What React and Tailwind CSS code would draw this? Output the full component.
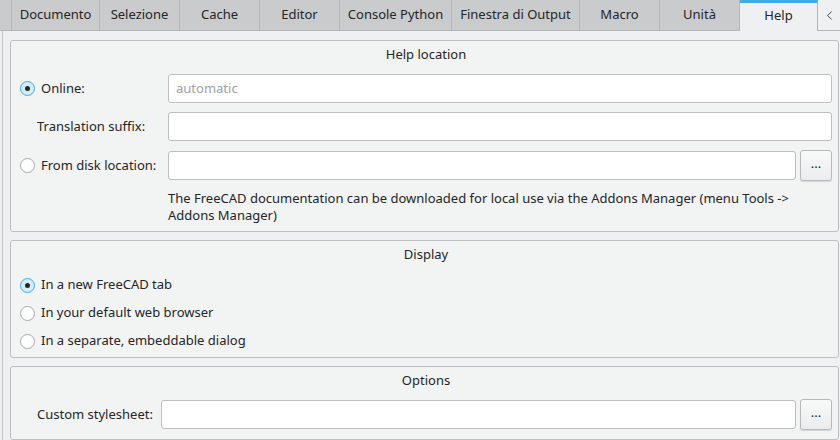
import { ChevronLeft } from "lucide-react";

const tabs = [
  { label: "Documento", w: "w-[88px]" },
  { label: "Selezione", w: "w-[80px]" },
  { label: "Cache", w: "w-[80px]" },
  { label: "Editor", w: "w-[80px]" },
  { label: "Console Python", w: "w-[112px]" },
  { label: "Finestra di Output", w: "w-[128px]" },
  { label: "Macro", w: "w-[80px]" },
  { label: "Unità", w: "w-[80px]" },
];

const Radio = ({ checked }) => (
  <span
    className={
      checked
        ? "flex h-[15px] w-[15px] shrink-0 items-center justify-center rounded-full border border-[#3daee9] bg-[#d4ebf8]"
        : "flex h-[15px] w-[15px] shrink-0 items-center justify-center rounded-full border border-[#a6a8aa] bg-white"
    }
  >
    {checked && <span className="h-[5px] w-[5px] rounded-full bg-[#232629]"></span>}
  </span>
);

const Input = ({ placeholder, className = "" }) => (
  <div
    className={`flex h-[29px] items-center rounded-[3px] border border-[#bcbebf] bg-white px-[7px] ${className}`}
  >
    {placeholder && <span className="text-[#a0a2a4]">{placeholder}</span>}
  </div>
);

const DotsButton = () => (
  <button className="flex h-[31px] w-[32px] shrink-0 items-center justify-center rounded-[3px] border border-[#b6b8ba] bg-gradient-to-b from-[#f8f9f9] to-[#ebeced] pb-[4px] text-[#232629] shadow-[0_1px_1px_rgba(0,0,0,0.12)]">
    ...
  </button>
);

const GroupTitle = ({ children }) => (
  <div className="mt-[4px] h-[18px] text-center leading-[18px]">{children}</div>
);

const App = () => {
  return (
    <div
      className="h-[440px] w-[840px] overflow-hidden bg-[#eff0f1] text-[13px] text-[#232629]"
      style={{ fontFamily: '"Noto Sans", "DejaVu Sans", sans-serif' }}
    >
      {/* barra delle schede */}
      <div className="flex h-[31px] bg-[#cacbcc]">
        <div className="w-[12px] border-b border-r border-[#b3b5b6]"></div>
        {tabs.map((t) => (
          <div
            key={t.label}
            className={`${t.w} flex items-center justify-center border-b border-r border-[#b3b5b6]`}
          >
            {t.label}
          </div>
        ))}
        <div className="flex w-[78px] items-center justify-center border-t-[3px] border-r border-[#3daee9] border-r-[#b3b5b6] bg-[#eff0f1] pb-[2px]">
          Help
        </div>
        <div className="flex w-[22px] items-center justify-center border-b border-[#b3b5b6] bg-[#eff0f1]">
          <ChevronLeft size={15} strokeWidth={1.3} className="text-[#232629]" />
        </div>
      </div>

      <div className="ml-[2px] h-[409px] border-l border-[#c3c5c6] pl-[7px] pt-[9px] pr-[1px]">
        {/* Help location */}
        <div className="h-[192px] rounded-[3px] border border-[#bcbebf] bg-[#f2f3f3] pl-[9px] pr-[6px]">
          <GroupTitle>Help location</GroupTitle>

          <div className="mt-[10px] flex h-[31px] items-center">
            <div className="flex w-[148px] items-center gap-[6px]">
              <Radio checked />
              <span>Online:</span>
            </div>
            <Input placeholder="automatic" className="flex-1" />
          </div>

          <div className="mt-[7px] flex h-[31px] items-center">
            <div className="w-[148px] pl-[17px]">Translation suffix:</div>
            <Input className="flex-1" />
          </div>

          <div className="mt-[8px] flex h-[31px] items-center gap-[4px]">
            <div className="flex w-[144px] items-center gap-[6px]">
              <Radio />
              <span>From disk location:</span>
            </div>
            <Input className="flex-1" />
            <DotsButton />
          </div>

          <p className="mt-[9px] pl-[148px] leading-[17px]">
            The FreeCAD documentation can be downloaded for local use via the Addons Manager (menu Tools -&gt;
            <br />
            Addons Manager)
          </p>
        </div>

        {/* Display */}
        <div className="mt-[8px] h-[118px] rounded-[3px] border border-[#bcbebf] bg-[#f2f3f3] pl-[9px] pr-[6px]">
          <GroupTitle>Display</GroupTitle>
          <div className="mt-[8px] flex flex-col">
            {[
              { label: "In a new FreeCAD tab", checked: true },
              { label: "In your default web browser", checked: false },
              { label: "In a separate, embeddable dialog", checked: false },
            ].map((o) => (
              <div key={o.label} className="flex h-[28px] items-center gap-[6px]">
                <Radio checked={o.checked} />
                <span>{o.label}</span>
              </div>
            ))}
          </div>
        </div>

        {/* Options */}
        <div className="mt-[8px] h-[74px] rounded-[3px] border border-[#bcbebf] bg-[#f2f3f3] pl-[9px] pr-[6px]">
          <GroupTitle>Options</GroupTitle>
          <div className="mt-[10px] flex h-[31px] items-center gap-[4px]">
            <div className="w-[137px] pl-[17px]">Custom stylesheet:</div>
            <Input className="flex-1" />
            <DotsButton />
          </div>
        </div>
      </div>
    </div>
  );
};

export default App;
